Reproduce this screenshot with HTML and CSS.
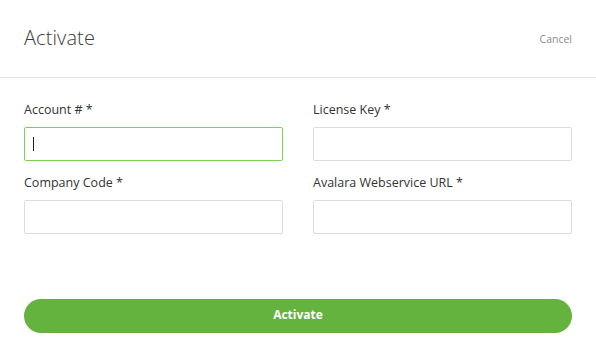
FILE: index.html
```html
<!DOCTYPE html>
<html>
<head>
<meta charset="utf-8">
<link rel="stylesheet" href="styles.css">
</head>
<body>
<div class="modal">
  <header class="header">
    <h1 class="title">Activate</h1>
    <a class="cancel">Cancel</a>
  </header>
  <div class="body">
    <div class="grid">
      <div class="field">
        <label class="label">Account # *</label>
        <div class="input focused"><span class="caret"></span></div>
      </div>
      <div class="field">
        <label class="label">License Key *</label>
        <div class="input"></div>
      </div>
      <div class="field">
        <label class="label">Company Code *</label>
        <div class="input"></div>
      </div>
      <div class="field">
        <label class="label">Avalara Webservice URL *</label>
        <div class="input"></div>
      </div>
    </div>
    <button class="submit">Activate</button>
  </div>
</div>
</body>
</html>
```
FILE: styles.css
```css
* { box-sizing: border-box; }
html, body { margin: 0; padding: 0; background: #fff; }
body { font-family: "Open Sans", "Noto Sans", sans-serif; color: #333; }
.modal { width: 596px; }
.header {
  height: 78px;
  border-bottom: 1px solid #e6e6e6;
  display: flex;
  align-items: center;
  justify-content: space-between;
  padding: 0 24px 2px 24px;
}
.title {
  margin: 0;
  font-size: 20px;
  font-weight: 300;
  color: #3c3c3c;
  letter-spacing: 0.1px;
}
.cancel {
  font-size: 10.5px;
  color: #8a8a8a;
  margin-top: 2px;
}
.body { padding: 23px 24px 0 24px; }
.grid {
  display: grid;
  grid-template-columns: 259px 259px;
  column-gap: 30px;
  row-gap: 13px;
}
.field { display: flex; flex-direction: column; }
.label {
  font-size: 12.5px;
  line-height: 18px;
  height: 18px;
  color: #333;
  margin-bottom: 8px;
}
.input {
  height: 34px;
  border: 1px solid #dcdcdc;
  border-radius: 2px;
  display: flex;
  align-items: center;
  padding-left: 8px;
}
.input.focused { border-color: #77d451; }
.caret { width: 1px; height: 14px; background: #222; }
.submit {
  margin-top: 65px;
  width: 548px;
  height: 34px;
  border: none;
  border-radius: 17px;
  background: #63b33e;
  color: #fff;
  font-family: "Open Sans", "Noto Sans", sans-serif;
  font-weight: 700;
  font-size: 12px;
  padding: 0 0 3px 0;
}
```
